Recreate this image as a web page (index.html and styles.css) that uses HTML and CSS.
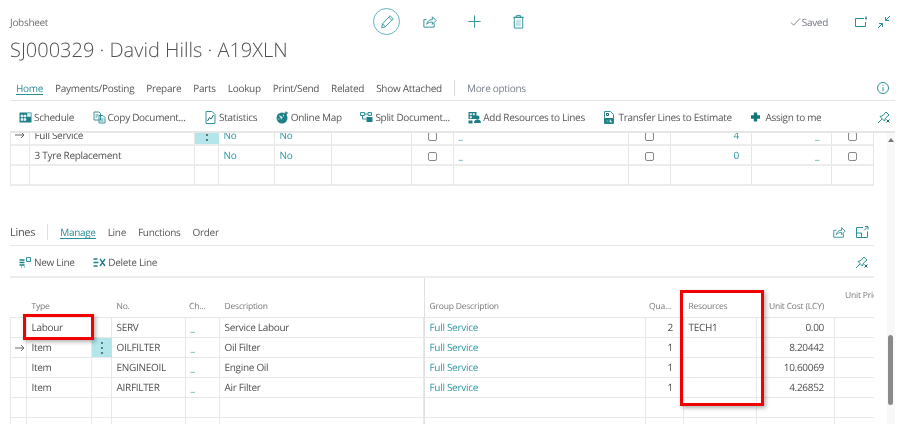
FILE: index.html
```html
<!DOCTYPE html>
<html lang="en">
<head>
<meta charset="utf-8">
<title>Jobsheet SJ000329</title>
<link rel="stylesheet" href="styles.css">
</head>
<body>
<div class="page">
  <header class="head">
    <div class="topbar">
      <span class="caption">Jobsheet</span>
      <div class="doc-tools">
        <span class="edit-ring"><svg class="ic18" viewBox="0 0 18 18"><path d="M3 15.500l1-4.500L12.500 2l3.500 3.500L7 14.500z M11 3.500L14.500 7 M4 11l3 3.500"/></svg></span>
        <svg class="ic16 tool" viewBox="0 0 16 16"><path d="M13 10v4H2V6h3 M5 11c.5-3.500 3-5 6-5V3l4 4-4 4V8.500c-2.500 0-4.500.8-6 2.500z"/></svg>
        <svg class="ic16 tool" viewBox="0 0 16 16"><path d="M8 1.500v13 M1.500 8h13"/></svg>
        <svg class="ic16 tool" viewBox="0 0 16 16"><path d="M3.500 3.500h9V15h-9z M2.500 3.500h11 M6 3.500V1.500h4v2"/><path class="fill-soft" d="M5.500 6h5v7h-5z"/></svg>
      </div>
      <div class="status">
        <svg class="check" viewBox="0 0 12 10"><path d="M1 5.500l3 3L11 1"/></svg>
        <span>Saved</span>
        <svg class="ic14 open" viewBox="0 0 14 14"><path d="M10 3.500H1.500v8h10V7"/><path class="thick2" d="M11 3.500h2 M12 1.500v1"/></svg>
        <svg class="ic14 shrink" viewBox="0 0 14 14"><path d="M13 1L8.500 5.500 M8.500 2v3.500H12 M1 13l4.500-4.500 M5.500 12V8.500H2"/></svg>
      </div>
    </div>
    <h1 class="title">SJ000329 · David Hills · A19XLN</h1>
    <nav class="tabs">
      <a class="tab active">Home</a>
      <a class="tab">Payments/Posting</a>
      <a class="tab">Prepare</a>
      <a class="tab">Parts</a>
      <a class="tab">Lookup</a>
      <a class="tab">Print/Send</a>
      <a class="tab">Related</a>
      <a class="tab">Show Attached</a>
      <span class="tab-sep"></span>
      <a class="tab more">More options</a>
      <svg class="ic14 info" viewBox="0 0 14 14"><circle cx="7" cy="7" r="5.500"/><path d="M7 6.200v4 M7 3.800v1"/></svg>
    </nav>
    <div class="actions">
      <span class="action"><svg class="act" viewBox="0 0 13 13"><path class="solid" d="M.5 1.500h12v10H.5z"/><path class="cut" d="M2 4h2v2H2z M5 4h2v2H5z M2 7.500h2v2H2z M5 7.500h2v2H5z M8.500 2.500h3v3h-3z"/></svg>Schedule</span>
      <span class="action"><svg class="act" viewBox="0 0 13 13"><path d="M1 1h5l1.500 1.500V9H1z M6 4.500h4L12 6.500V12H6z M2.500 4h3 M2.500 6h2 M7.500 8h3 M7.500 10h3"/></svg>Copy Document...</span>
      <span class="action stat"><svg class="act" viewBox="0 0 13 13"><path d="M2 .5h6L11 3.500v9H2z"/><path class="dark" d="M3.500 10l2-3.500L7 8l2.500-4"/></svg>Statistics</span>
      <span class="action"><svg class="act" viewBox="0 0 13 13"><circle class="solid" cx="6" cy="7" r="5.500"/><path class="cut" d="M3 4.500c1 1 2 .5 3 1.500s-1 1-.5 2.500 M8 3.500c-1 .5-1 1.500 0 2 M1.500 8h2"/><path class="dark" d="M10 .5v3.500 M8.500 2h3.500"/></svg>Online Map</span>
      <span class="action"><svg class="act" viewBox="0 0 13 13"><path d="M.5 1.500h4v3h-4z M2.500 4.500V8h4 M4.500 3H8"/><path class="solid" d="M6.500 6h6v5h-6z"/><path class="soft" d="M8 1.500h3.500v3H8z"/></svg>Split Document...</span>
      <span class="action"><svg class="act" viewBox="0 0 13 13"><path class="solid" d="M.5 1h8v7h-8z"/><path class="cut" d="M2 2.500h1.500V4H2z M5 2.500h1.500V4H5z M2 5.500h1.500V7H2z"/><circle class="solid" cx="9.500" cy="6.500" r="2"/><path class="solid" d="M6 12c0-2.500 1.500-3.500 3.500-3.500S13 9.500 13 12z"/><path class="solid" d="M.5 9.500h4v3h-4z"/></svg>Add Resources to Lines</span>
      <span class="action"><svg class="act" viewBox="0 0 13 13"><path d="M1.500.5h6l3 3v9h-9z"/><path class="dark" d="M3.500 2.500h2v2h-2z"/><path class="solid" d="M1.500 7h9v5.500h-9z"/><path class="cut" d="M3.500 10h2 M7 8.500v2.500h2"/></svg>Transfer Lines to Estimate</span>
      <span class="action"><svg class="act" viewBox="0 0 13 13"><path class="thick" d="M5.500 1.500v9 M1 6h9"/></svg>Assign to me</span>
      <svg class="ic14 pin" viewBox="0 0 14 14"><path d="M1 13l4-4 M3 6.500l4.500 4.500 1-3L12 5 9 2 6 5.500z"/><path class="dark" d="M9.500 9.500l3 3 M12.500 9.500l-3 3"/></svg>
    </div>
  </header>

  <main class="scroller">
    <div class="upper-clip">
      <table class="grid upper">
        <colgroup><col class="u1"><col class="u2"><col class="u3"><col class="u4"><col class="u5"><col class="u6"><col class="u7"><col class="u8"><col class="u9"><col class="u10"><col class="u11"><col class="u12"></colgroup>
        <tbody>
          <tr><td class="marker"><svg class="arrow" viewBox="0 0 10 8"><path d="M0 4h9 M6 1l3 3-3 3"/></svg></td><td>Full Service</td><td class="kebab"><svg viewBox="0 0 4 14"><circle cx="2" cy="2" r=".9"/><circle cx="2" cy="7" r=".9"/><circle cx="2" cy="12" r=".9"/></svg></td><td class="link">No</td><td class="link">No</td><td></td><td class="mid"><span class="box"></span></td><td class="link">_</td><td class="mid"><span class="box"></span></td><td class="link num">4</td><td class="link num">_</td><td class="mid"><span class="box"></span></td></tr>
          <tr><td></td><td>3 Tyre Replacement</td><td></td><td class="link">No</td><td class="link">No</td><td></td><td class="mid"><span class="box"></span></td><td class="link">_</td><td class="mid"><span class="box"></span></td><td class="link num">0</td><td class="link num">_</td><td class="mid"><span class="box"></span></td></tr>
          <tr><td></td><td></td><td></td><td></td><td></td><td></td><td></td><td></td><td></td><td></td><td></td><td></td></tr>
        </tbody>
      </table>
    </div>

    <section class="lines">
      <div class="lines-bar">
        <strong class="lines-name">Lines</strong>
        <span class="lines-sep"></span>
        <a class="tab active">Manage</a>
        <a class="tab">Line</a>
        <a class="tab">Functions</a>
        <a class="tab">Order</a>
        <svg class="ic14 lines-share" viewBox="0 0 16 16"><path d="M13 10v4H2V6h3 M5 11c.5-3.500 3-5 6-5V3l4 4-4 4V8.500c-2.500 0-4.500.8-6 2.500z"/></svg>
        <svg class="ic14 lines-expand" viewBox="0 0 14 14"><path d="M8 2.500H1.500v10h11V6.500 M1.500 8h5v4.500 M9 5.500L12.500 2 M10 1.500h3v3"/></svg>
      </div>
      <div class="lines-actions">
        <span class="action"><svg class="act" viewBox="0 0 13 13"><path class="thick2" d="M.5 4h5 M.5 6.500h5 M.5 9h5"/><path d="M7.500 1.500h4v4h-4z M2 11h1 M5 11h1"/></svg>New Line</span>
        <span class="action"><svg class="act" viewBox="0 0 13 13"><path class="thick2" d="M.5 3h4 M.5 6.500h5 M.5 10h4 M7 3l5 7 M12 3l-5 7"/></svg>Delete Line</span>
        <svg class="ic14 pin lines-pin" viewBox="0 0 14 14"><path d="M1 13l4-4 M3 6.500l4.500 4.500 1-3L12 5 9 2 6 5.500z"/><path class="dark" d="M9.500 9.500l3 3 M12.500 9.500l-3 3"/></svg>
      </div>
      <table class="grid lower">
        <colgroup><col class="l1"><col class="l2"><col class="l3"><col class="l4"><col class="l5"><col class="l6"><col class="l7"><col class="l8"><col class="l9"><col class="l10"><col class="l11"></colgroup>
        <thead>
          <tr><th></th><th>Type</th><th></th><th>No.</th><th class="tight">Ch...</th><th>Description</th><th class="divide">Group Description</th><th class="tight">Qua...</th><th>Resources</th><th class="num">Unit Cost (LCY)</th><th class="raised">Unit Price</th></tr>
        </thead>
        <tbody>
          <tr><td></td><td>Labour</td><td></td><td>SERV</td><td class="link">_</td><td>Service Labour</td><td class="link divide">Full Service</td><td class="num">2</td><td>TECH1</td><td class="num">0.00</td><td></td></tr>
          <tr><td class="marker"><svg class="arrow" viewBox="0 0 10 8"><path d="M0 4h9 M6 1l3 3-3 3"/></svg></td><td>Item</td><td class="kebab"><svg viewBox="0 0 4 14"><circle cx="2" cy="2" r=".9"/><circle cx="2" cy="7" r=".9"/><circle cx="2" cy="12" r=".9"/></svg></td><td>OILFILTER</td><td class="link">_</td><td>Oil Filter</td><td class="link divide">Full Service</td><td class="num">1</td><td></td><td class="num">8.20442</td><td></td></tr>
          <tr><td></td><td>Item</td><td></td><td>ENGINEOIL</td><td class="link">_</td><td>Engine Oil</td><td class="link divide">Full Service</td><td class="num">1</td><td></td><td class="num">10.60069</td><td></td></tr>
          <tr><td></td><td>Item</td><td></td><td>AIRFILTER</td><td class="link">_</td><td>Air Filter</td><td class="link divide">Full Service</td><td class="num">1</td><td></td><td class="num">4.26852</td><td></td></tr>
          <tr><td></td><td></td><td></td><td></td><td></td><td></td><td class="divide"></td><td></td><td></td><td></td><td></td></tr>
          <tr><td></td><td></td><td></td><td></td><td></td><td></td><td class="divide"></td><td></td><td></td><td></td><td></td></tr>
        </tbody>
      </table>
    </section>

    <div class="callout callout-type"></div>
    <div class="callout callout-res"></div>
    <div class="scrollbar"><span class="sb-up"></span><span class="sb-thumb"></span></div>
  </main>
</div>
</body>
</html>
```
FILE: styles.css
```css
* { box-sizing: border-box; }
html, body { margin: 0; height: 100%; overflow: hidden; background: #fff; }
body { font-family: "Open Sans", "Noto Sans", sans-serif; font-size: 10px; letter-spacing: -.3px; color: #505050; text-rendering: geometricPrecision; }
.page { width: 899px; height: 424px; overflow: hidden; filter: blur(.3px); }
svg { display: block; fill: none; stroke: #2b8f96; stroke-width: 1; flex: none; }

.head { padding: 0 4px 0 10px; }
.topbar { position: relative; display: flex; align-items: center; height: 35px; padding-top: 8px; }
.caption { color: #6f6f6f; width: 363px; }
.doc-tools { display: flex; align-items: center; }
.edit-ring { display: flex; align-items: center; justify-content: center; width: 27px; height: 27px; border: 1px solid #5fb4ba; border-radius: 50%; margin-right: 22px; }
.ic18 { width: 16px; height: 16px; }
.ic16 { width: 15px; height: 15px; }
.ic14 { width: 14px; height: 14px; }
.tool { margin-right: 29.500px; }
.fill-soft { fill: #bfe3e6; stroke: none; }
.status { display: flex; align-items: center; margin-left: auto; color: #6f7580; margin-right: 4px; }
.check { width: 11px; height: 10px; stroke: #7b8088; margin-right: 1px; }
.open { margin-left: 26px; }
.shrink { margin-left: 9px; }

.title { margin: 0; font-size: 20px; letter-spacing: 0; font-weight: 300; line-height: 30px; height: 30px; color: #4f4f4f; }

.tabs { display: flex; align-items: center; gap: 12px; height: 23px; margin-top: 13px; padding: 0 0 2px 6px; border-bottom: 1px solid #e4e4e4; }
.tab { position: relative; color: #565656; white-space: nowrap; line-height: 14px; }
.tab.active { color: #2b8f96; }
.tab.active::after { content: ""; position: absolute; left: 0; right: 0; bottom: 0; height: 1px; background: #2b8f96; }
.tab-sep { width: 1px; height: 16px; background: #d6d6d6; }
.more { color: #78808c; }
.info { margin-left: auto; margin-right: 5px; }

.actions { display: flex; align-items: center; gap: 18.600px; height: 32px; padding: 2px 0 0 9px; border-bottom: 2px solid #e6e6e6; }
.action { display: flex; align-items: center; gap: 2px; white-space: nowrap; color: #565656; }
.act { width: 13px; height: 13px; stroke: #35949b; }
.solid { fill: #1f7f87; stroke: none; }
.cut { stroke: #dff3f4; fill: #dff3f4; stroke-width: .6; }
.dark { stroke: #17666d; }
.soft { stroke: #35949b; fill: #cfeaec; }
.thick { stroke: #14767d; stroke-width: 3.400; }
.thick2 { stroke: #1f7f87; stroke-width: 1.300; }
.pin { margin-left: auto; margin-right: 4px; }

.scroller { position: relative; height: 291px; padding-left: 10px; }
.upper-clip { width: 864px; height: 53px; overflow: hidden; }
.grid { table-layout: fixed; border-collapse: separate; border-spacing: 0; }
.grid td, .grid th { overflow: hidden; white-space: nowrap; padding: 0 4.500px; }
.grid td { height: 20px; border-bottom: 2px solid #ececec; border-right: 1px solid #e6e6e6; }
.upper { width: 864px; margin-top: -7px; border-left: 1px solid #e6e6e6; }
.u1 { width: 19px; } .u2 { width: 165px; } .u3 { width: 24px; } .u4 { width: 56px; } .u5 { width: 57px; } .u6 { width: 80px; }
.u7 { width: 42px; } .u8 { width: 175px; } .u9 { width: 42px; } .u10 { width: 81px; } .u11 { width: 80px; } .u12 { width: 42px; }
.link { color: #2d979e; }
.num { text-align: right; }
.upper .num { padding-right: 12px; }
.mid { text-align: center; }
.box { display: inline-block; width: 9px; height: 9px; border: 1px solid #888; border-radius: 2px; vertical-align: middle; }
.marker { padding: 0 !important; }
.arrow { width: 10px; height: 8px; margin-left: 4px; stroke: #666; }
.kebab { background: #b2e6eb; padding: 0 !important; border-right-color: #b2e6eb !important; }
.kebab svg { width: 4px; height: 14px; margin: 0 auto; fill: #33474a; stroke: none; }

.lines { width: 864px; }
.lines-bar { display: flex; align-items: center; gap: 12px; height: 60px; padding-top: 33px; border-bottom: 1px solid #e6e6e6; }
.lines-name { font-weight: 500; font-size: 11px; color: #505050; }
.lines-sep { width: 1px; height: 16px; background: #e0e0e0; }
.lines-share { margin-left: auto; margin-right: -3px; }
.lines-expand { margin-right: 5px; }
.lines-actions { display: flex; align-items: center; gap: 18.600px; height: 32px; padding: 2px 0 0 9px; border-bottom: 2px solid #ececec; }
.lines-pin { margin-right: 5px; }

.lower { width: 864px; }
.l1 { width: 17px; } .l2 { width: 65px; } .l3 { width: 20px; } .l4 { width: 74px; } .l5 { width: 34px; } .l6 { width: 204px; }
.l7 { width: 222px; } .l8 { width: 38px; } .l9 { width: 73px; } .l10 { width: 78px; } .l11 { width: 39px; }
.lower thead th { height: 40px; font-weight: 400; font-size: 8.500px; letter-spacing: -.2px; color: #777; text-align: left; vertical-align: bottom; padding-bottom: 5px; border-bottom: 1px solid #e6e6e6; }
.lower thead .num { text-align: right; padding-right: 11px; }
.lower thead .tight { padding-left: 3px; padding-right: 0; }
.lower thead .raised { vertical-align: top; padding: 12px 0 0 10px; overflow: hidden; }
.lower .divide { border-left: 1px solid #e0e0e0; }
.lower td { padding-bottom: 2px; border-bottom: 1px solid #e8e8e8; border-right: 1px solid #e8e8e8; }
.lower td:first-child { border-left: 1px solid #e8e8e8; }
.lower td.num { padding-right: 10px; }
.lower td:last-child { border-right: 0; }

.callout { position: absolute; border: 3px solid #f00000; box-shadow: 2px 2px 4px rgba(0, 0, 0, .3); }
.callout-type { left: 23px; top: 181px; width: 71px; height: 26px; }
.callout-res { left: 680px; top: 157px; width: 84px; height: 116px; }

.scrollbar { position: absolute; left: 887px; top: 0; width: 8px; height: 291px; background: #f8f8f8; }
.sb-up { position: absolute; left: 1px; top: 5px; width: 0; height: 0; border: 3px solid transparent; border-top: 0; border-bottom: 4px solid #777; }
.sb-thumb { position: absolute; left: 1px; top: 202px; width: 5px; height: 70px; background: #8a8a8a; border-radius: 3px; }
```
